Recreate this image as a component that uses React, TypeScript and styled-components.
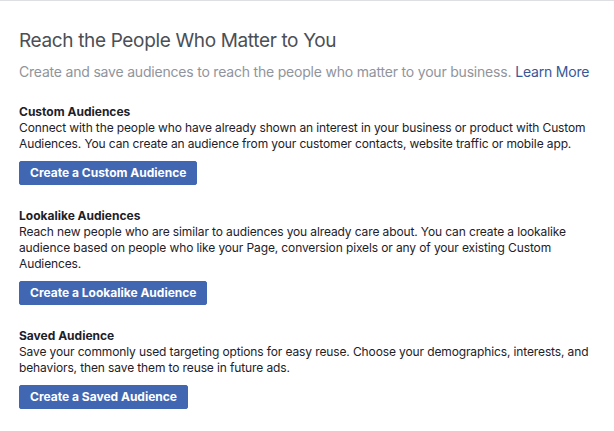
import React from "react";
import styled, { createGlobalStyle } from "styled-components";

const Global = createGlobalStyle`
  html, body { margin: 0; padding: 0; background: #fff; }
  body { font-family: Inter, "Liberation Sans", Arial, sans-serif; -webkit-font-smoothing: antialiased; }
  * { box-sizing: border-box; }
`;

const Page = styled.div`
  border-top: 1px solid #dddfe2;
  padding: 27px 19px 20px;
  display: flex;
  flex-direction: column;
`;

const Title = styled.h1`
  margin: 0;
  font-size: 19px;
  line-height: 26px;
  font-weight: 400;
  letter-spacing: -0.35px;
  color: #4b4f56;
`;

const Subtitle = styled.p`
  margin: 9px 0 0;
  font-size: 14px;
  line-height: 18px;
  letter-spacing: -0.2px;
  color: #90949c;
`;

const Link = styled.a`
  color: #365899;
  text-decoration: none;
  margin-left: 4px;
`;

const Section = styled.section`
  margin-top: 23px;
  display: flex;
  flex-direction: column;
  align-items: flex-start;
`;

const Heading = styled.h2`
  margin: 0;
  font-size: 12px;
  line-height: 16px;
  font-weight: 700;
  color: #1d2129;
`;

const Desc = styled.p`
  margin: 0;
  font-size: 12px;
  line-height: 16px;
  letter-spacing: -0.12px;
  color: #1d2129;
`;

const Button = styled.button`
  margin-top: 9px;
  height: 24px;
  padding: 0 10px;
  border: 1px solid #4267b2;
  border-radius: 2px;
  background: #4267b2;
  color: #fff;
  font-family: inherit;
  font-size: 12px;
  font-weight: 700;
  line-height: 22px;
  cursor: pointer;
`;

const sections = [
  {
    title: "Custom Audiences",
    text: "Connect with the people who have already shown an interest in your business or product with Custom Audiences. You can create an audience from your customer contacts, website traffic or mobile app.",
    button: "Create a Custom Audience",
  },
  {
    title: "Lookalike Audiences",
    text: "Reach new people who are similar to audiences you already care about. You can create a lookalike audience based on people who like your Page, conversion pixels or any of your existing Custom Audiences.",
    button: "Create a Lookalike Audience",
  },
  {
    title: "Saved Audience",
    text: "Save your commonly used targeting options for easy reuse. Choose your demographics, interests, and behaviors, then save them to reuse in future ads.",
    button: "Create a Saved Audience",
  },
];

export default function App() {
  return (
    <>
      <Global />
      <Page>
        <Title>Reach the People Who Matter to You</Title>
        <Subtitle>
          Create and save audiences to reach the people who matter to your business.
          <Link href="#">Learn More</Link>
        </Subtitle>
        {sections.map((s) => (
          <Section key={s.title}>
            <Heading>{s.title}</Heading>
            <Desc>{s.text}</Desc>
            <Button>{s.button}</Button>
          </Section>
        ))}
      </Page>
    </>
  );
}
